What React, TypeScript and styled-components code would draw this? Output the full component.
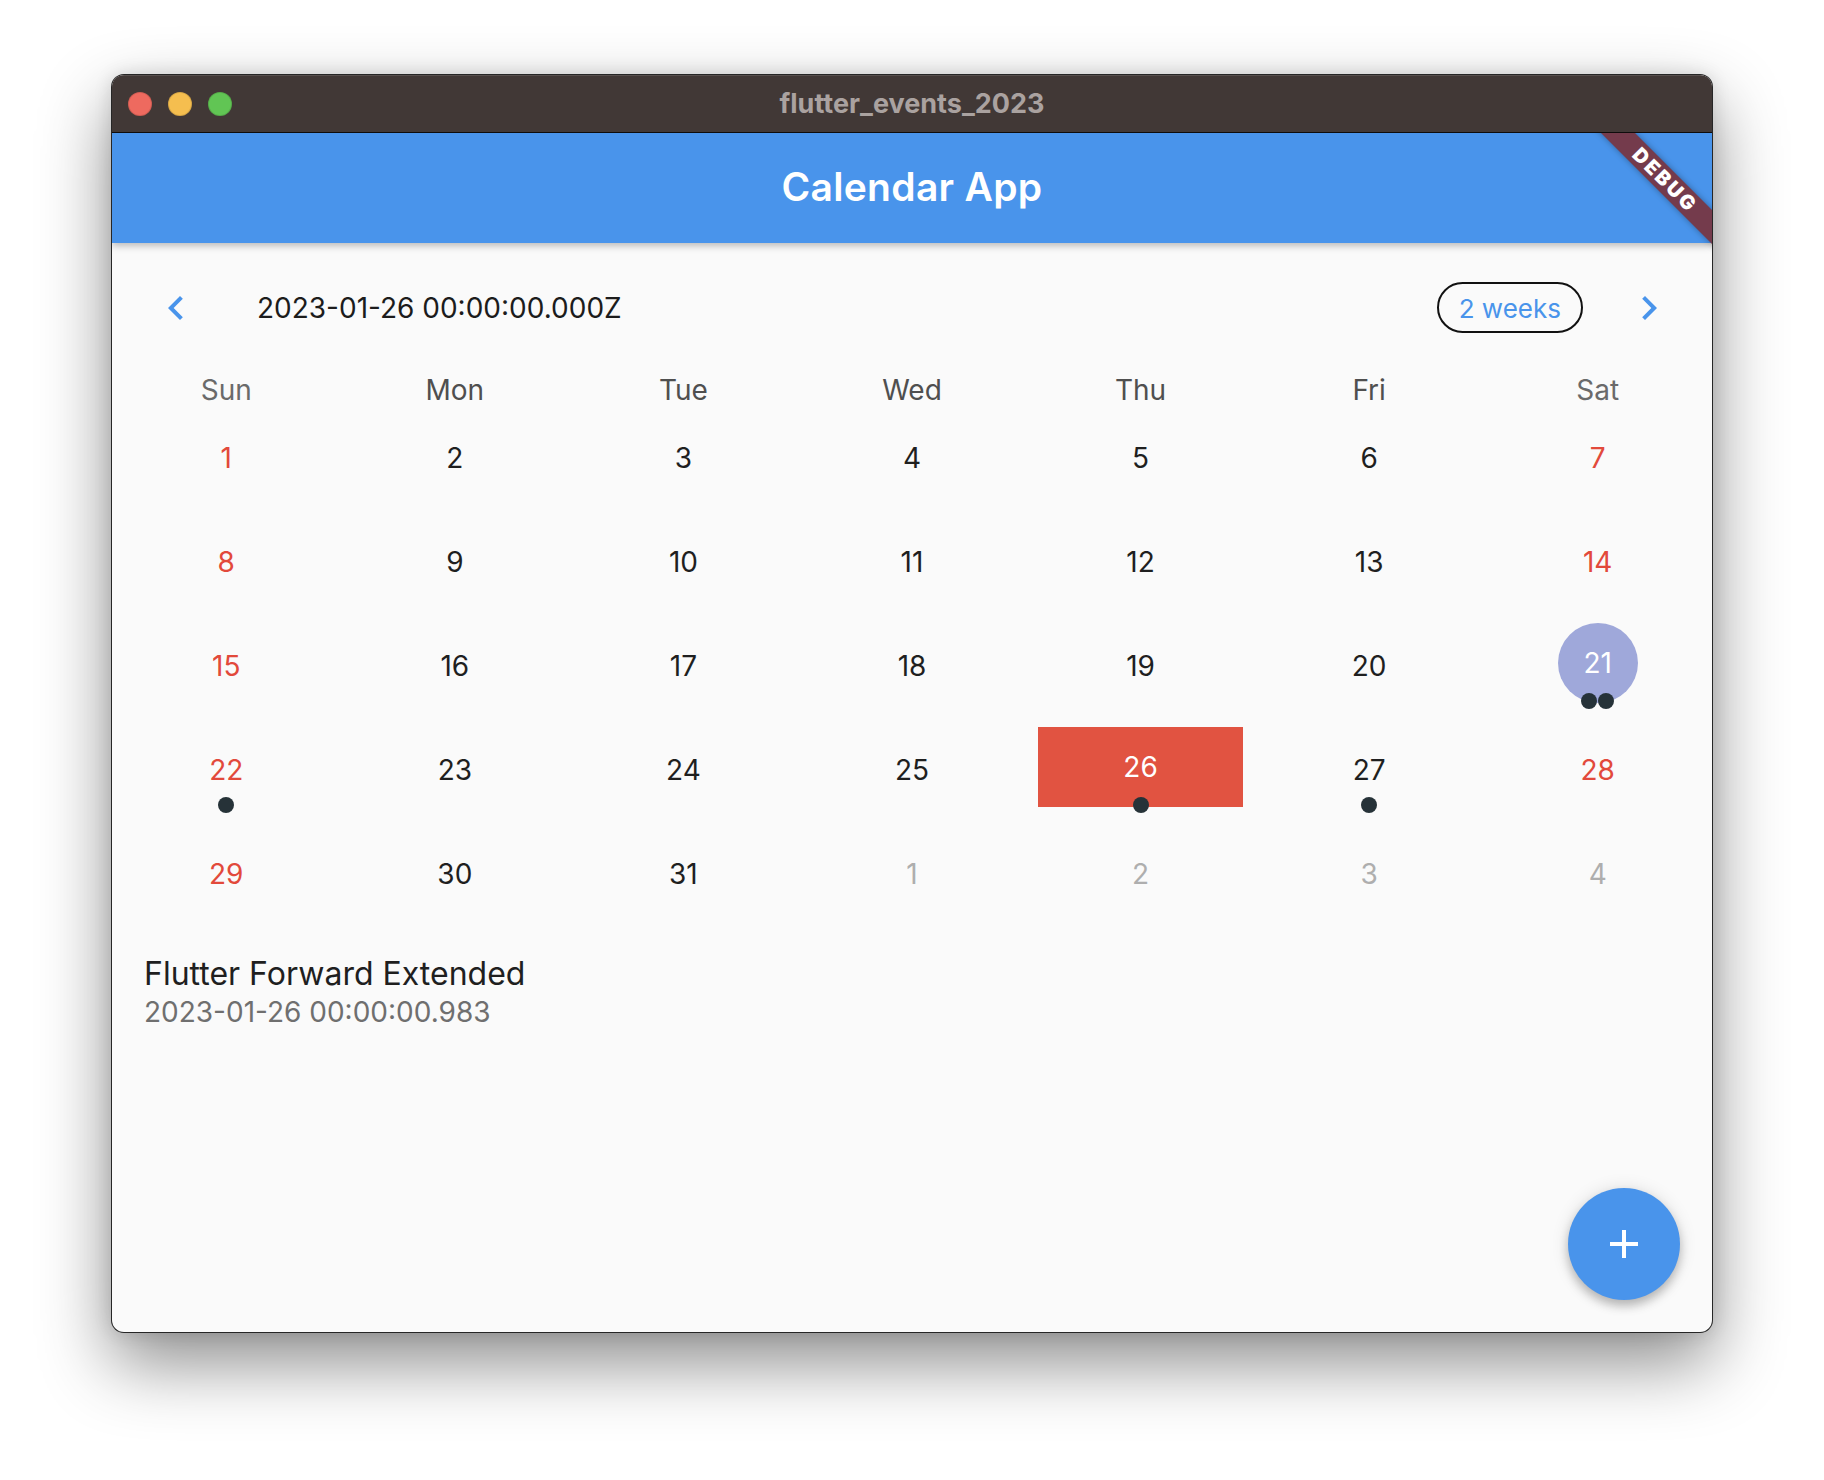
import React from "react";
import styled, { createGlobalStyle } from "styled-components";

const BLUE = "#4994eb";
const RED = "#e2493b";
const RED_FILL = "#e15341";

const GlobalStyle = createGlobalStyle`
  html, body { margin: 0; padding: 0; background: #ffffff; }
  body { font-family: Inter, "Noto Sans", sans-serif; -webkit-font-smoothing: antialiased; }
  * { box-sizing: border-box; }
`;

const Page = styled.div`
  width: 1824px;
  height: 1480px;
  padding: 74px 0 0 111px;
  overflow: hidden;
  background: #ffffff;
`;

const Window = styled.div`
  width: 1602px;
  height: 1259px;
  border: 1px solid rgba(0, 0, 0, 0.85);
  border-radius: 13px;
  overflow: hidden;
  display: flex;
  flex-direction: column;
  background: #fafafa;
  box-shadow: 0 30px 70px rgba(0, 0, 0, 0.45), 0 0 18px rgba(0, 0, 0, 0.12);
`;

const TitleBar = styled.div`
  height: 58px;
  flex: none;
  background: #413836;
  border-bottom: 1px solid #0e0c0c;
  box-shadow: inset 0 1px 0 rgba(255, 255, 255, 0.12);
  display: grid;
  grid-template-columns: 1fr auto 1fr;
  align-items: center;
  padding: 0 16px;
`;

const Lights = styled.div`
  display: flex;
  gap: 16px;
  align-items: center;
`;

const Light = styled.span<{ $color: string }>`
  width: 24px;
  height: 24px;
  border-radius: 50%;
  background: ${(p) => p.$color};
  box-shadow: inset 0 0 0 1px rgba(0, 0, 0, 0.12);
`;

const WindowTitle = styled.div`
  font-family: Inter, sans-serif;
  font-weight: 700;
  font-size: 27px;
  color: #aaa2a0;
  line-height: 1;
`;

const AppArea = styled.div`
  position: relative;
  flex: 1;
  display: flex;
  flex-direction: column;
  overflow: hidden;
`;

const AppHeader = styled.header`
  height: 110px;
  flex: none;
  background: ${BLUE};
  display: flex;
  align-items: center;
  justify-content: center;
  box-shadow: 0 3px 7px rgba(0, 0, 0, 0.26);
  position: relative;
  z-index: 1;
`;

const AppTitle = styled.h1`
  margin: 0;
  font-family: Inter, sans-serif;
  font-weight: 600;
  font-size: 39px;
  letter-spacing: 0.3px;
  color: #ffffff;
  line-height: 1;
  padding-bottom: 3px;
`;

const DebugRibbon = styled.div`
  position: absolute;
  top: 35.25px;
  right: -52.75px;
  width: 200px;
  height: 24px;
  transform: rotate(45deg);
  background: #743b4c;
  color: #ffffff;
  font-family: Inter, sans-serif;
  font-weight: 900;
  font-size: 20px;
  letter-spacing: 2.5px;
  line-height: 24px;
  text-align: center;
  box-shadow: 0 0 6px rgba(0, 0, 0, 0.35);
  z-index: 5;
`;

const Body = styled.main`
  flex: 1;
  position: relative;
  padding-top: 37px;
  display: flex;
  flex-direction: column;
`;

const NavRow = styled.div`
  height: 55px;
  display: flex;
  align-items: center;
  padding: 0 39px 0 40px;
`;

const ChevronButton = styled.button`
  width: 48px;
  height: 48px;
  border: none;
  background: transparent;
  padding: 0;
  display: flex;
  align-items: center;
  justify-content: center;
  color: ${BLUE};
  flex: none;
`;

const DateTitle = styled.div`
  flex: 1;
  margin-left: 57px;
  font-size: 28px;
  color: #1c1c1c;
  line-height: 1;
`;

const FormatPill = styled.button`
  height: 51px;
  padding: 2px 20px 0;
  margin-right: 42px;
  border: 2px solid #111111;
  border-radius: 26px;
  background: transparent;
  color: ${BLUE};
  font-family: Inter, sans-serif;
  font-size: 26px;
  line-height: 1;
  display: flex;
  align-items: center;
`;

const WeekdayRow = styled.div`
  margin-top: 36px;
  height: 32px;
  display: grid;
  grid-template-columns: repeat(7, 1fr);
`;

const Weekday = styled.div<{ $weekend: boolean }>`
  height: 32px;
  padding-top: 6px;
  line-height: 26px;
  text-align: center;
  font-size: 28px;
  color: ${(p) => (p.$weekend ? "#6a6a6a" : "#4f4f4f")};
`;

const DayGrid = styled.div`
  display: grid;
  grid-template-columns: repeat(7, 1fr);
  grid-auto-rows: 104px;
`;

const Cell = styled.div`
  position: relative;
  display: flex;
  align-items: center;
  justify-content: center;
`;

type Tone = "normal" | "weekend" | "outside";

const toneColor: Record<Tone, string> = {
  normal: "#1f1f1f",
  weekend: RED,
  outside: "#aeaeae",
};

const DayLabel = styled.span<{ $tone: Tone }>`
  font-size: 28px;
  line-height: 28px;
  padding-top: 6px;
  color: ${(p) => toneColor[p.$tone]};
`;

const TodayCircle = styled.div`
  width: 80px;
  height: 80px;
  border-radius: 50%;
  background: #9fa8da;
  color: #ffffff;
  font-size: 28px;
  display: flex;
  align-items: center;
  justify-content: center;
`;

const SelectedBox = styled.div`
  width: calc(100% - 24px);
  height: 80px;
  background: ${RED_FILL};
  color: #ffffff;
  font-size: 28px;
  display: flex;
  align-items: center;
  justify-content: center;
`;

const Markers = styled.div`
  position: absolute;
  left: 0;
  right: 0;
  bottom: 6px;
  display: flex;
  justify-content: center;
  gap: 1px;
`;

const Dot = styled.span`
  width: 16px;
  height: 16px;
  border-radius: 50%;
  background: #263238;
`;

const EventTile = styled.div`
  padding: 31px 32px 0;
  display: flex;
  flex-direction: column;
`;

const EventTitle = styled.div`
  font-size: 32px;
  line-height: 40px;
  color: #1f1f1f;
`;

const EventSub = styled.div`
  font-size: 28px;
  line-height: 36px;
  color: #6f6f6f;
`;

const Fab = styled.button`
  position: absolute;
  right: 32px;
  bottom: 32px;
  width: 112px;
  height: 112px;
  border-radius: 50%;
  border: none;
  background: ${BLUE};
  display: flex;
  align-items: center;
  justify-content: center;
  box-shadow: 0 6px 10px rgba(0, 0, 0, 0.22), 0 1px 18px rgba(0, 0, 0, 0.12);
`;

const ChevronLeft = () => (
  <svg width="50" height="50" viewBox="0 0 24 24" fill="currentColor">
    <path d="M15.41 7.41L14 6l-6 6 6 6 1.41-1.41L10.83 12z" />
  </svg>
);

const ChevronRight = () => (
  <svg width="50" height="50" viewBox="0 0 24 24" fill="currentColor">
    <path d="M10 6L8.59 7.41 13.17 12l-4.58 4.59L10 18l6-6z" />
  </svg>
);

const PlusIcon = () => (
  <svg width="48" height="48" viewBox="0 0 24 24" fill="#ffffff">
    <path d="M19 13h-6v6h-2v-6H5v-2h6V5h2v6h6v2z" />
  </svg>
);

type Day = { n: number; outside?: boolean };

const weeks: Day[][] = [
  [1, 2, 3, 4, 5, 6, 7].map((n) => ({ n })),
  [8, 9, 10, 11, 12, 13, 14].map((n) => ({ n })),
  [15, 16, 17, 18, 19, 20, 21].map((n) => ({ n })),
  [22, 23, 24, 25, 26, 27, 28].map((n) => ({ n })),
  [
    { n: 29 },
    { n: 30 },
    { n: 31 },
    { n: 1, outside: true },
    { n: 2, outside: true },
    { n: 3, outside: true },
    { n: 4, outside: true },
  ],
];

const events: Record<number, number> = { 21: 2, 22: 1, 26: 1, 27: 1 };
const TODAY = 21;
const SELECTED = 26;
const weekdays = ["Sun", "Mon", "Tue", "Wed", "Thu", "Fri", "Sat"];

export default function App() {
  return (
    <>
      <GlobalStyle />
      <Page>
        <Window>
          <TitleBar>
            <Lights>
              <Light $color="#ee6a5f" />
              <Light $color="#f5be4f" />
              <Light $color="#61c554" />
            </Lights>
            <WindowTitle>flutter_events_2023</WindowTitle>
            <span />
          </TitleBar>
          <AppArea>
            <AppHeader>
              <AppTitle>Calendar App</AppTitle>
            </AppHeader>
            <DebugRibbon>DEBUG</DebugRibbon>
            <Body>
              <NavRow>
                <ChevronButton aria-label="previous">
                  <ChevronLeft />
                </ChevronButton>
                <DateTitle>2023-01-26 00:00:00.000Z</DateTitle>
                <FormatPill>2 weeks</FormatPill>
                <ChevronButton aria-label="next">
                  <ChevronRight />
                </ChevronButton>
              </NavRow>
              <WeekdayRow>
                {weekdays.map((w, i) => (
                  <Weekday key={w} $weekend={i === 0 || i === 6}>
                    {w}
                  </Weekday>
                ))}
              </WeekdayRow>
              <DayGrid>
                {weeks.map((week, wi) =>
                  week.map((d, di) => {
                    const inMonth = !d.outside;
                    const isToday = inMonth && d.n === TODAY;
                    const isSelected = inMonth && d.n === SELECTED;
                    const tone: Tone = d.outside
                      ? "outside"
                      : di === 0 || di === 6
                      ? "weekend"
                      : "normal";
                    const count = inMonth ? events[d.n] || 0 : 0;
                    return (
                      <Cell key={`${wi}-${di}`}>
                        {isToday ? (
                          <TodayCircle>{d.n}</TodayCircle>
                        ) : isSelected ? (
                          <SelectedBox>{d.n}</SelectedBox>
                        ) : (
                          <DayLabel $tone={tone}>{d.n}</DayLabel>
                        )}
                        {count > 0 && (
                          <Markers>
                            {Array.from({ length: count }).map((_, k) => (
                              <Dot key={k} />
                            ))}
                          </Markers>
                        )}
                      </Cell>
                    );
                  })
                )}
              </DayGrid>
              <EventTile>
                <EventTitle>Flutter Forward Extended</EventTitle>
                <EventSub>2023-01-26 00:00:00.983</EventSub>
              </EventTile>
              <Fab aria-label="add">
                <PlusIcon />
              </Fab>
            </Body>
          </AppArea>
        </Window>
      </Page>
    </>
  );
}
